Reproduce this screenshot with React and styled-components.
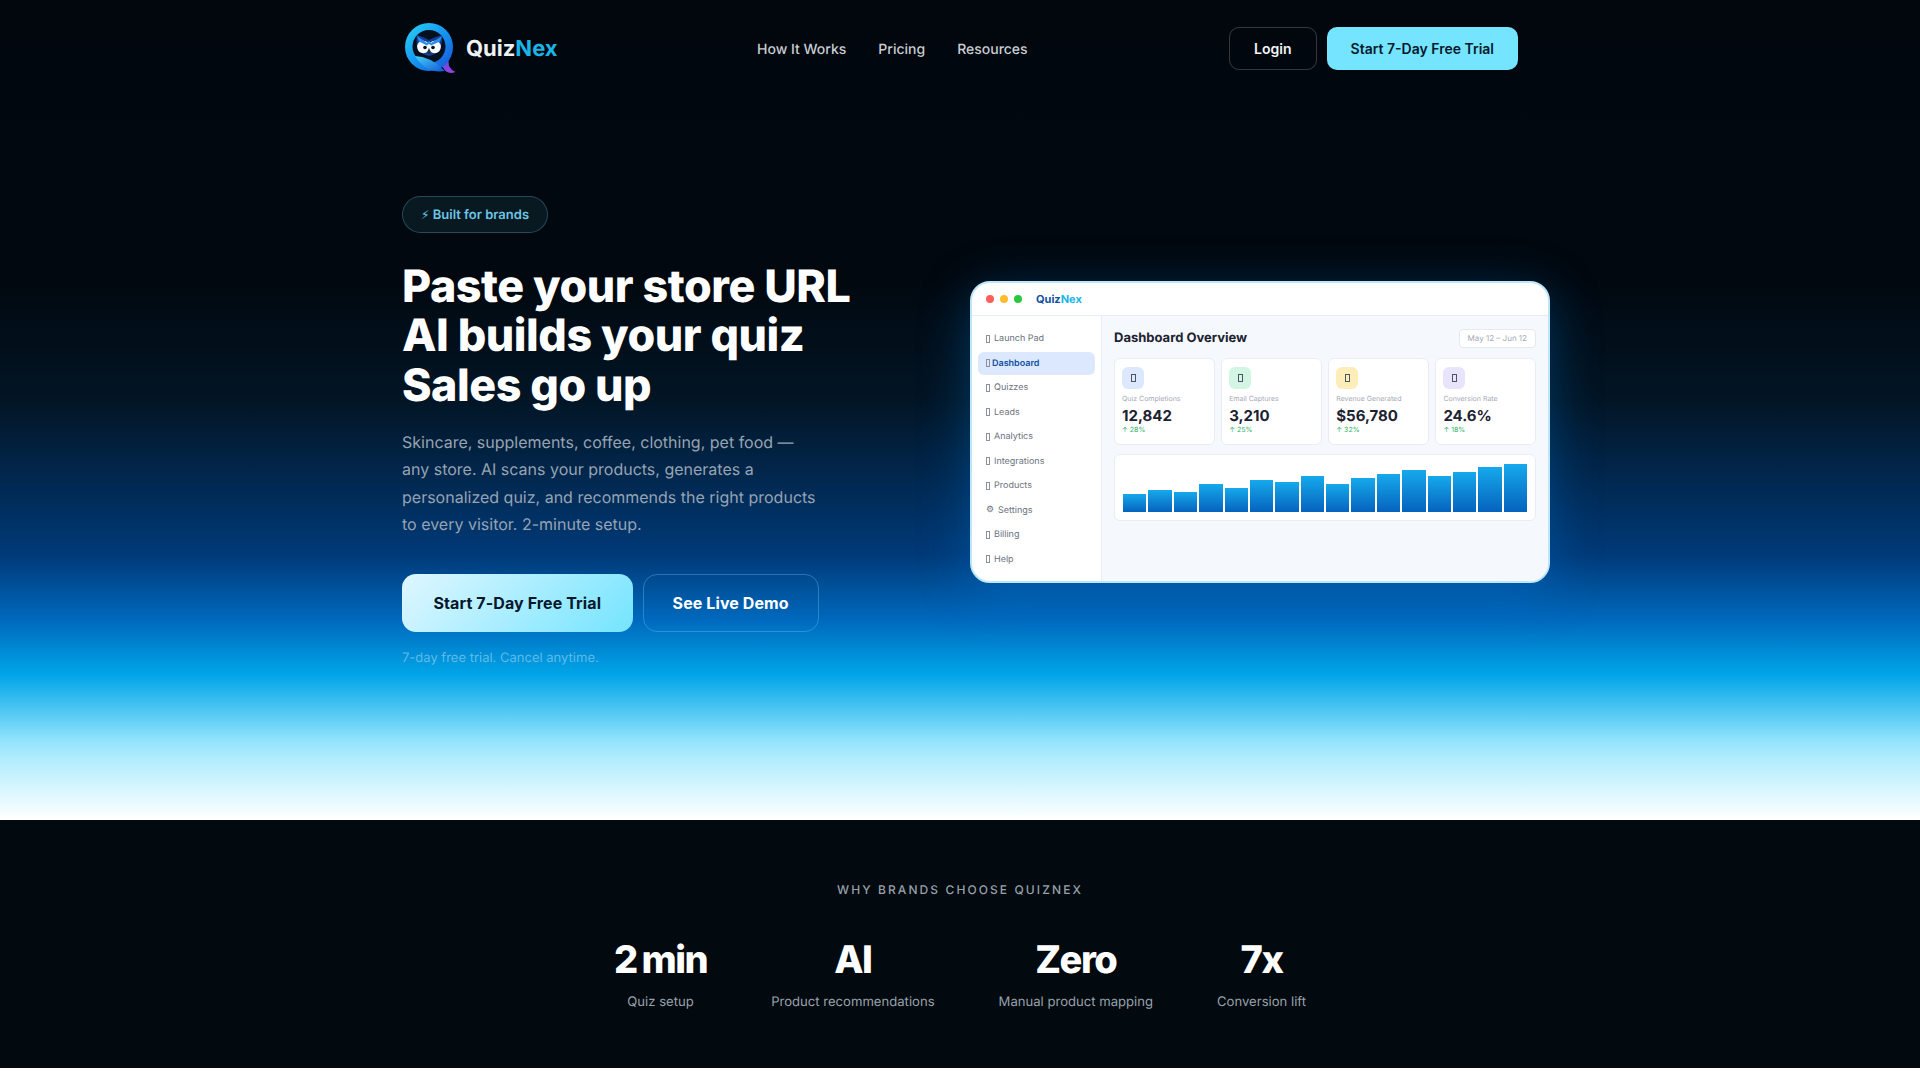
import React from "react";
import styled, { createGlobalStyle } from "styled-components";

const GlobalStyle = createGlobalStyle`
  * { box-sizing: border-box; }
  html, body { margin: 0; padding: 0; background: #fff; }
  body {
    font-family: Inter, "Liberation Sans", sans-serif;
    text-rendering: geometricPrecision;
  }
`;

const Top = styled.div`
  height: 820px;
  background: linear-gradient(
    180deg,
    #01070d 0%,
    #01080f 34%,
    #021525 48.8%,
    #003a78 67.7%,
    #0069bd 75.6%,
    #00a5e8 82.3%,
    #8fe3fc 90.2%,
    #b3edfe 92.7%,
    #ffffff 100%
  );
`;

const Container = styled.div`
  width: 1116px;
  margin: 0 auto;
`;

const Nav = styled.nav`
  height: 97px;
  display: flex;
  align-items: center;
`;

const LogoLink = styled.a`
  display: flex;
  align-items: center;
  gap: 10px;
  width: 355px;
`;

const LogoText = styled.span`
  padding-top: 1px;
  font-size: 22px;
  font-weight: 700;
  color: #eef2f5;
  span {
    color: #1bb4e8;
  }
`;

const NavLinks = styled.div`
  display: flex;
  gap: 32px;
  flex: 1;
  padding-top: 1px;
`;

const NavLink = styled.a`
  font-size: 14px;
  font-weight: 500;
  color: #c9ced4;
`;

const NavActions = styled.div`
  display: flex;
  gap: 10px;
`;

const NavButton = styled.button`
  height: 43px;
  padding: 0 24px;
  border-radius: 10px;
  font: 600 14px Inter, sans-serif;
  color: ${(p) => (p.$primary ? "#06182c" : "#f2f4f6")};
  background: ${(p) => (p.$primary ? "#74e4ff" : "transparent")};
  border: ${(p) => (p.$primary ? "none" : "1px solid rgba(255,255,255,0.2)")};
`;

const Hero = styled.section`
  display: grid;
  grid-template-columns: 1fr 580px;
  align-items: center;
  margin-right: -32px;
  padding-top: 99px;
`;

const Badge = styled.div`
  display: inline-block;
  height: 37px;
  line-height: 36px;
  padding: 0 18px;
  border-radius: 19px;
  border: 1px solid rgba(116, 228, 255, 0.25);
  background: rgba(116, 228, 255, 0.08);
  color: #6cc6e6;
  font-size: 13px;
  font-weight: 600;
`;

const Bolt = styled.span`
  font-family: "DejaVu Sans", sans-serif;
  font-size: 12px;
  font-variant-emoji: text;
  font-weight: 400;
`;

const Title = styled.h1`
  margin: 29px 0 19px;
  font-size: 44.8px;
  line-height: 49.3px;
  font-weight: 800;
  letter-spacing: -0.45px;
  color: #fff;
`;

const Lead = styled.p`
  margin: 0 0 35.5px;
  width: 420px;
  font-size: 16px;
  line-height: 27.4px;
  color: #97a3b2;
`;

const Cta = styled.div`
  display: flex;
  gap: 10px;
`;

const CtaButton = styled.button`
  height: 58px;
  padding: 0 ${(p) => (p.$primary ? "31.5px" : "29px")};
  border-radius: 14px;
  font: 700 16px Inter, sans-serif;
  letter-spacing: 0.1px;
  color: ${(p) => (p.$primary ? "#06182c" : "#fff")};
  background: ${(p) => (p.$primary ? "linear-gradient(135deg, #e0f7ff, #74e4ff)" : "transparent")};
  border: ${(p) => (p.$primary ? "none" : "1px solid rgba(116,200,255,0.35)")};
`;

const Note = styled.p`
  margin: 16px 0 0;
  font-size: 13px;
  line-height: 20px;
  color: rgba(255, 255, 255, 0.38);
`;

const Mock = styled.div`
  width: 580px;
  height: 302px;
  display: flex;
  flex-direction: column;
  border: 2px solid #bde6f8;
  border-radius: 20px;
  background: #fff;
  overflow: hidden;
  box-shadow: 0 10px 50px rgba(0, 130, 230, 0.35);
`;

const MockBar = styled.div`
  height: 33px;
  flex: none;
  display: flex;
  align-items: center;
  gap: 6px;
  padding-left: 14px;
  border-bottom: 1px solid #e8edf3;
`;

const Dot = styled.i`
  width: 8px;
  height: 8px;
  border-radius: 50%;
  background: ${(p) => p.$color};
`;

const MockBrand = styled.span`
  margin-left: 8px;
  font-size: 11px;
  font-weight: 700;
  color: #0f4fa0;
  span {
    color: #1bb4e8;
  }
`;

const MockBody = styled.div`
  flex: 1;
  display: flex;
  min-height: 0;
`;

const Side = styled.aside`
  width: 130px;
  flex: none;
  padding: 11px 6px 0;
  border-right: 1px solid #e8edf3;
`;

const SideItem = styled.div`
  height: 23px;
  margin-bottom: 1.5px;
  padding-left: 8px;
  display: flex;
  align-items: center;
  gap: ${(p) => (p.$active ? "2px" : "4px")};
  border-radius: 6px;
  font-size: 9px;
  font-weight: ${(p) => (p.$active ? 600 : 400)};
  color: ${(p) => (p.$active ? "#0f4fa0" : "#6b7280")};
  background: ${(p) => (p.$active ? "#dbe8fd" : "transparent")};
`;

// missing-glyph box, the dashboard icons have no font in the screenshot
const Tofu = styled.span`
  flex: none;
  display: inline-block;
  width: ${(p) => (p.$large ? "5px" : "4px")};
  height: 8px;
  border: 1px solid ${(p) => (p.$large ? "#4b5563" : "#8a919c")};
`;

const Gear = styled.span`
  font-family: "DejaVu Sans", sans-serif;
  font-size: 9px;
  font-variant-emoji: text;
`;

const Main = styled.main`
  flex: 1;
  padding: 12px 12px 0 12px;
  background: #f5f8fc;
`;

const MainHead = styled.div`
  height: 20px;
  display: flex;
  align-items: center;
  justify-content: space-between;
`;

const MainTitle = styled.h2`
  margin: 0;
  font-size: 13px;
  font-weight: 700;
  color: #1c2230;
`;

const DatePill = styled.span`
  height: 19px;
  padding: 0 8px;
  display: flex;
  align-items: center;
  background: #fff;
  border: 1px solid #e5e9f0;
  border-radius: 4px;
  font-size: 8px;
  color: #a3aab6;
`;

const Cards = styled.div`
  display: grid;
  grid-template-columns: repeat(4, 1fr);
  gap: 6.5px;
  margin-top: 10px;
`;

const Card = styled.div`
  height: 86.5px;
  padding: 8px 7px;
  background: #fff;
  border: 1px solid #e9edf3;
  border-radius: 6px;
`;

const CardIcon = styled.div`
  width: 22px;
  height: 22px;
  display: flex;
  align-items: center;
  justify-content: center;
  border-radius: 6px;
  background: ${(p) => p.$bg};
`;

const CardLabel = styled.div`
  margin-top: 5px;
  font-size: 7px;
  line-height: 10px;
  color: #a3aab6;
`;

const CardValue = styled.div`
  margin-top: 2px;
  font-size: 15px;
  line-height: 19px;
  font-weight: 700;
  color: #1c2230;
`;

const CardTrend = styled.div`
  font-size: 7px;
  line-height: 9px;
  color: #36b56a;
`;

const Chart = styled.div`
  height: 67px;
  margin-top: 9.5px;
  padding: 9px 8px 8px;
  display: flex;
  align-items: flex-end;
  gap: 2px;
  background: #fff;
  border: 1px solid #e9edf3;
  border-radius: 6px;
`;

const Bar = styled.div`
  flex: 1;
  height: ${(p) => p.$h}px;
  background: linear-gradient(180deg, #16a9ec, #0563bd);
`;

const Stats = styled.section`
  height: 248px;
  padding-top: 62px;
  background: #02090f;
  text-align: center;
`;

const StatsTitle = styled.div`
  font-size: 12px;
  line-height: 16px;
  font-weight: 500;
  letter-spacing: 2.1px;
  color: #98a1ab;
`;

const StatRow = styled.div`
  display: flex;
  justify-content: center;
  gap: 64px;
  margin-top: 36px;
`;

const StatValue = styled.div`
  font-size: 38px;
  line-height: 52px;
  font-weight: 800;
  letter-spacing: -1.5px;
  word-spacing: -2px;
  color: #fff;
`;

const StatLabel = styled.div`
  margin-top: 6px;
  font-size: 13.1px;
  line-height: 20px;
  color: #98a1ab;
`;

function Logo() {
  return (
    <svg width="54" height="54" viewBox="0 0 54 54" aria-hidden="true">
      <defs>
        <linearGradient id="ring" x1="0" y1="0" x2="1" y2="1">
          <stop offset="0" stopColor="#2bd4f7" />
          <stop offset="0.55" stopColor="#1390ee" />
          <stop offset="1" stopColor="#1a4fd8" />
        </linearGradient>
        <linearGradient id="tail" x1="0" y1="0" x2="1" y2="1">
          <stop offset="0" stopColor="#3b5be0" />
          <stop offset="1" stopColor="#a83ce0" />
        </linearGradient>
        <linearGradient id="wing" x1="0" y1="0" x2="1" y2="1">
          <stop offset="0" stopColor="#45d0f7" />
          <stop offset="1" stopColor="#1259d8" />
        </linearGradient>
      </defs>
      <path d="M38 40 L46 34 L47 44 Q49 48 53.5 50 Q48 52 44 49.5 Q40 46 38 40Z" fill="url(#tail)" />
      <circle cx="27" cy="25" r="24" fill="url(#ring)" />
      <circle cx="27" cy="24.5" r="16.5" fill="#04101f" />
      <path d="M15 13 Q22 15 27 18 Q32 15 40 13 Q40.500 22 37.500 28 Q33 33 27 34 Q21 33 16.500 28 Q13.500 22 15 13Z" fill="#123f96" />
      <circle cx="21.300" cy="25" r="6.200" fill="#f7f9fc" />
      <circle cx="32.700" cy="25" r="6.200" fill="#f7f9fc" />
      <circle cx="23" cy="25.500" r="1.800" fill="#08101f" />
      <circle cx="31" cy="25.500" r="1.800" fill="#08101f" />
      <path d="M15 14 L25 21 L27 19 L29 21 L40 14 L38 19.500 L29 23.500 L27 21.500 L25 23.500 L17 19.500Z" fill="#2a8fe8" />
      <path d="M27 26 L28.800 30 L27 33 L25.200 30Z" fill="#2a3140" />
      <path d="M13 34 Q28 34 43 49 Q24 52 13 34Z" fill="url(#wing)" />
    </svg>
  );
}

const navLinks = ["How It Works", "Pricing", "Resources"];

const sideItems = [
  { label: "Launch Pad" },
  { label: "Dashboard", active: true },
  { label: "Quizzes" },
  { label: "Leads" },
  { label: "Analytics" },
  { label: "Integrations" },
  { label: "Products" },
  { label: "Settings", gear: true },
  { label: "Billing" },
  { label: "Help" },
];

const cards = [
  { bg: "#dbe8fd", label: "Quiz Completions", value: "12,842", trend: "↑ 28%" },
  { bg: "#d3f5e3", label: "Email Captures", value: "3,210", trend: "↑ 25%" },
  { bg: "#fdeeb9", label: "Revenue Generated", value: "$56,780", trend: "↑ 32%" },
  { bg: "#e8e4fb", label: "Conversion Rate", value: "24.6%", trend: "↑ 18%" },
];

const bars = [18, 22, 20, 28, 24, 32, 30, 36, 28, 34, 38, 42, 36, 40, 45, 48];

const stats = [
  ["2 min", "Quiz setup"],
  ["AI", "Product recommendations"],
  ["Zero", "Manual product mapping"],
  ["7x", "Conversion lift"],
];

export default function App() {
  return (
    <>
      <GlobalStyle />
      <Top>
        <Container>
          <Nav>
            <LogoLink>
              <Logo />
              <LogoText>
                Quiz<span>Nex</span>
              </LogoText>
            </LogoLink>
            <NavLinks>
              {navLinks.map((l) => (
                <NavLink key={l}>{l}</NavLink>
              ))}
            </NavLinks>
            <NavActions>
              <NavButton>Login</NavButton>
              <NavButton $primary>Start 7-Day Free Trial</NavButton>
            </NavActions>
          </Nav>
          <Hero>
            <div>
              <Badge>
                <Bolt>⚡</Bolt> Built for brands
              </Badge>
              <Title>
                Paste your store URL
                <br />
                AI builds your quiz
                <br />
                Sales go up
              </Title>
              <Lead>
                Skincare, supplements, coffee, clothing, pet food — any store. AI scans your products,
                generates a personalized quiz, and recommends the right products to every visitor.
                2-minute setup.
              </Lead>
              <Cta>
                <CtaButton $primary>Start 7-Day Free Trial</CtaButton>
                <CtaButton>See Live Demo</CtaButton>
              </Cta>
              <Note>7-day free trial. Cancel anytime.</Note>
            </div>
            <Mock>
              <MockBar>
                <Dot $color="#ff5f57" />
                <Dot $color="#febc2e" />
                <Dot $color="#28c840" />
                <MockBrand>
                  Quiz<span>Nex</span>
                </MockBrand>
              </MockBar>
              <MockBody>
                <Side>
                  {sideItems.map((item) => (
                    <SideItem key={item.label} $active={item.active}>
                      {item.gear ? <Gear>⚙</Gear> : <Tofu />}
                      {item.label}
                    </SideItem>
                  ))}
                </Side>
                <Main>
                  <MainHead>
                    <MainTitle>Dashboard Overview</MainTitle>
                    <DatePill>May 12 – Jun 12</DatePill>
                  </MainHead>
                  <Cards>
                    {cards.map((c) => (
                      <Card key={c.label}>
                        <CardIcon $bg={c.bg}>
                          <Tofu $large />
                        </CardIcon>
                        <CardLabel>{c.label}</CardLabel>
                        <CardValue>{c.value}</CardValue>
                        <CardTrend>{c.trend}</CardTrend>
                      </Card>
                    ))}
                  </Cards>
                  <Chart>
                    {bars.map((h, i) => (
                      <Bar key={i} $h={h} />
                    ))}
                  </Chart>
                </Main>
              </MockBody>
            </Mock>
          </Hero>
        </Container>
      </Top>
      <Stats>
        <StatsTitle>WHY BRANDS CHOOSE QUIZNEX</StatsTitle>
        <StatRow>
          {stats.map(([value, label]) => (
            <div key={label}>
              <StatValue>{value}</StatValue>
              <StatLabel>{label}</StatLabel>
            </div>
          ))}
        </StatRow>
      </Stats>
    </>
  );
}
